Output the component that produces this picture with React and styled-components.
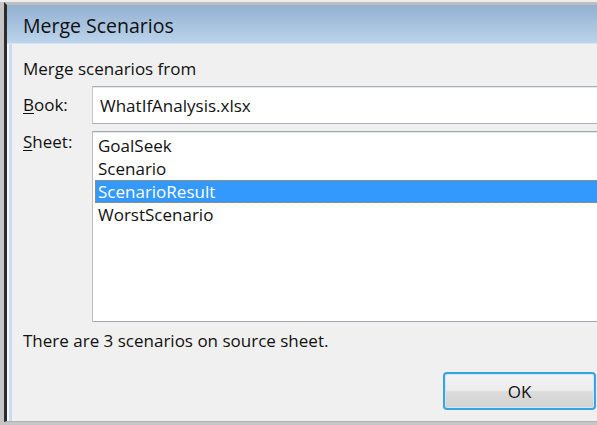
import React from "react";
import styled, { createGlobalStyle } from "styled-components";

const Global = createGlobalStyle`
  html, body {
    margin: 0;
    padding: 0;
    background: #c6c6c6;
  }
  body {
    font-family: "Open Sans", "Noto Sans", Arial, sans-serif;
    color: #111;
  }
`;

const Screen = styled.div`
  width: 597px;
  height: 425px;
  overflow: hidden;
  box-sizing: border-box;
  border-top: 2px solid #ececec;
  padding-left: 4px;
  background: #c6c6c6;
`;

const Window = styled.div`
  width: 640px;
  display: flex;
  flex-direction: column;
  border-top: 3px solid #bdbdbd;
  border-left: 3px solid #2c2c2c;
  border-bottom: 1px solid #b2b2b2;
`;

const TitleBar = styled.div`
  height: 36px;
  line-height: 38px;
  padding: 2px 0 0 16px;
  font-size: 19.5px;
  color: #0f0f0f;
  background: linear-gradient(#92b0d0, #bcd4ec);
  border-bottom: 1px solid #d8e6f4;
`;

const Body = styled.div`
  border-left: 2px solid #f7f7f7;
`;

const Content = styled.div`
  border-left: 3px solid #c9ddf1;
  background: #f0f0f0;
  padding: 15px 0 11px 11px;
  display: flex;
  flex-direction: column;
  font-size: 17px;
`;

const Text = styled.div`
  line-height: 20px;
  margin-top: ${(p) => p.$top || 0}px;
`;

const FieldRow = styled.div`
  display: grid;
  grid-template-columns: 69px 1fr;
  align-items: ${(p) => p.$align || "center"};
  margin-top: 7px;
`;

const Label = styled.label`
  line-height: 20px;
  margin-top: ${(p) => p.$top || 0}px;
  u {
    text-decoration: underline;
    text-underline-offset: 2px;
  }
`;

const TextBox = styled.div`
  height: 36px;
  line-height: 37px;
  background: #fff;
  border: 1px solid #abadb3;
  border-left-color: #c6c8cc;
  box-shadow: inset 0 1px 0 #e3e6ea;
  padding-left: 7px;
`;

const ListBox = styled.ul`
  list-style: none;
  margin: 0;
  height: 185px;
  padding: 2px 0 2px 2px;
  background: #fff;
  border: 1px solid #a6a8ad;
  border-left-color: #bcbec2;
  box-shadow: inset 0 1px 0 #e3e6ea;
`;

const Item = styled.li`
  height: 23px;
  line-height: 23px;
  padding-left: 3px;
  box-sizing: border-box;
  color: ${(p) => (p.$selected ? "#fff" : "#111")};
  background: ${(p) => (p.$selected ? "#3399ff" : "transparent")};
  outline: ${(p) => (p.$selected ? "1px dotted #e2852a" : "none")};
  outline-offset: -1px;
`;

const Footer = styled.div`
  display: flex;
  margin-top: 21px;
  padding-left: 420px;
`;

const Button = styled.button`
  width: 153px;
  height: 38px;
  box-sizing: border-box;
  border: 2px solid #3aa2dd;
  border-radius: 4px;
  background: linear-gradient(#f3f3f3 0%, #ececec 48%, #dcdcdc 52%, #d2d2d2 100%);
  box-shadow: inset 0 0 0 1px #c8eaf9;
  font-family: inherit;
  font-size: 17px;
  color: #111;
  padding: 0;
`;

const sheets = ["GoalSeek", "Scenario", "ScenarioResult", "WorstScenario"];

export default function App() {
  return (
    <>
      <Global />
      <Screen>
        <Window>
          <TitleBar>Merge Scenarios</TitleBar>
          <Body>
            <Content>
              <Text>Merge scenarios from</Text>
              <FieldRow>
                <Label>
                  <u>B</u>ook:
                </Label>
                <TextBox>WhatIfAnalysis.xlsx</TextBox>
              </FieldRow>
              <FieldRow $align="start">
                <Label $top={1}>
                  <u>S</u>heet:
                </Label>
                <ListBox>
                  {sheets.map((s) => (
                    <Item key={s} $selected={s === "ScenarioResult"}>
                      {s}
                    </Item>
                  ))}
                </ListBox>
              </FieldRow>
              <Text $top={9}>There are 3 scenarios on source sheet.</Text>
              <Footer>
                <Button>OK</Button>
              </Footer>
            </Content>
          </Body>
        </Window>
      </Screen>
    </>
  );
}
